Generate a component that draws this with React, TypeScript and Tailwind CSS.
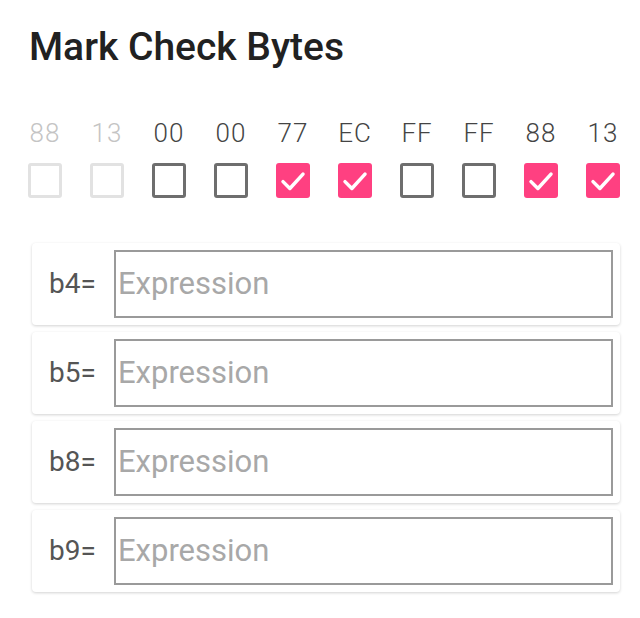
const bytes = [
  { v: "88", state: "disabled" },
  { v: "13", state: "disabled" },
  { v: "00", state: "off" },
  { v: "00", state: "off" },
  { v: "77", state: "on" },
  { v: "EC", state: "on" },
  { v: "FF", state: "off" },
  { v: "FF", state: "off" },
  { v: "88", state: "on" },
  { v: "13", state: "on" },
];

const rows = ["b4=", "b5=", "b8=", "b9="];

function Box({ state }: { state: string }) {
  if (state === "on") {
    return (
      <div className="w-[34px] h-[35px] rounded-[3px] bg-[#ff4081] flex items-center justify-center">
        <svg width="30" height="30" viewBox="0 0 24 24">
          <polyline
            points="4,12.5 9.5,18 20,6.5"
            fill="none"
            stroke="white"
            strokeWidth="2.8"
            strokeLinecap="round"
            strokeLinejoin="round"
          />
        </svg>
      </div>
    );
  }
  return (
    <div
      className={
        state === "disabled"
          ? "w-[34px] h-[35px] rounded-[3px] border-[3px] border-[#e2e2e2]"
          : "w-[34px] h-[35px] rounded-[3px] border-[3px] border-[#6e6e6e]"
      }
    />
  );
}

export default function App() {
  return (
    <div className="w-[640px] h-[618px] bg-white font-['Roboto',sans-serif] pt-[24px]">
      <h1 className="pl-[29px] text-[39px] leading-[46px] font-medium text-[#212121]">
        Mark Check Bytes
      </h1>

      <div className="grid grid-cols-10 w-[620px] ml-[14px] mt-[48px]">
        {bytes.map((b, i) => (
          <div key={i} className="flex flex-col items-center">
            <span
              className={
                b.state === "disabled"
                  ? "text-[26px] leading-[30px] font-light tracking-[1px] text-[#c4c4c4]"
                  : "text-[26px] leading-[30px] font-light tracking-[1px] text-[#444444]"
              }
            >
              {b.v}
            </span>
            <div className="mt-[15px]">
              <Box state={b.state} />
            </div>
          </div>
        ))}
      </div>

      <div className="ml-[32px] w-[588px] mt-[45px] flex flex-col gap-[7px]">
        {rows.map((r) => (
          <div
            key={r}
            className="flex items-center h-[82px] pl-[17px] pr-[7px] rounded-[4px] bg-white shadow-[0_1px_3px_rgba(0,0,0,0.18)]"
          >
            <span className="w-[65px] text-[28px] text-[#555555]">{r}</span>
            <div className="flex-1 h-[68px] border-2 border-[#9a9a9a] flex items-center pl-[2px]">
              <span className="text-[31px] text-[#a8a8a8]">Expression</span>
            </div>
          </div>
        ))}
      </div>
    </div>
  );
}
